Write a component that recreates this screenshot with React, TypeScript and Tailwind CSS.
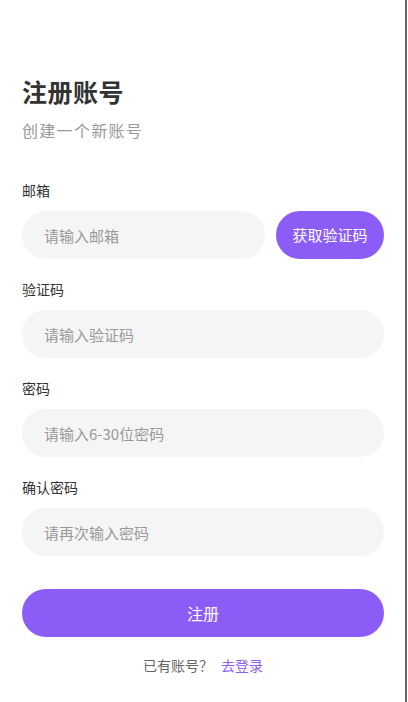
import React from "react";

function Field({ label, placeholder, children }: { label: string; placeholder: string; children?: React.ReactNode }) {
  return (
    <div className="mt-[20px] first:mt-0">
      <div className="h-[21px] text-[14px] leading-[21px] text-[#333]">{label}</div>
      <div className="mt-[10px] flex gap-[11px]">
        <input
          className="h-[48px] min-w-0 flex-1 rounded-full bg-[#f5f5f5] px-[22px] text-[15px] text-[#333] outline-none placeholder:text-[#999]"
          placeholder={placeholder}
        />
        {children}
      </div>
    </div>
  );
}

export default function App() {
  return (
    <div
      className="flex min-h-[702px] bg-white"
      style={{ fontFamily: '"Noto Sans CJK SC", "Noto Sans", sans-serif' }}
    >
      <div className="w-[407px] border-r-2 border-[#666] pl-[22px] pr-[21px] pt-[75px]">
        <h1 className="text-[25px] font-bold leading-[32px] tracking-[0.5px] text-[#333]">注册账号</h1>
        <p className="mt-[13px] text-[16px] leading-[20px] tracking-[1.3px] text-[#999]">创建一个新账号</p>
        <div className="mt-[40px]">
          <Field label="邮箱" placeholder="请输入邮箱">
            <button className="h-[48px] w-[108px] shrink-0 rounded-full bg-[#8b5cf6] text-[15px] text-white">
              获取验证码
            </button>
          </Field>
          <Field label="验证码" placeholder="请输入验证码" />
          <Field label="密码" placeholder="请输入6-30位密码" />
          <Field label="确认密码" placeholder="请再次输入密码" />
        </div>
        <button className="mt-[33px] h-[48px] w-full rounded-full bg-[#8b5cf6] text-[16px] text-white">注册</button>
        <div className="mt-[18px] flex justify-center text-[14px] leading-[20px]">
          <span className="text-[#666]">已有账号？</span>
          <span className="ml-[8px] text-[#8b5cf6]">去登录</span>
        </div>
      </div>
    </div>
  );
}
